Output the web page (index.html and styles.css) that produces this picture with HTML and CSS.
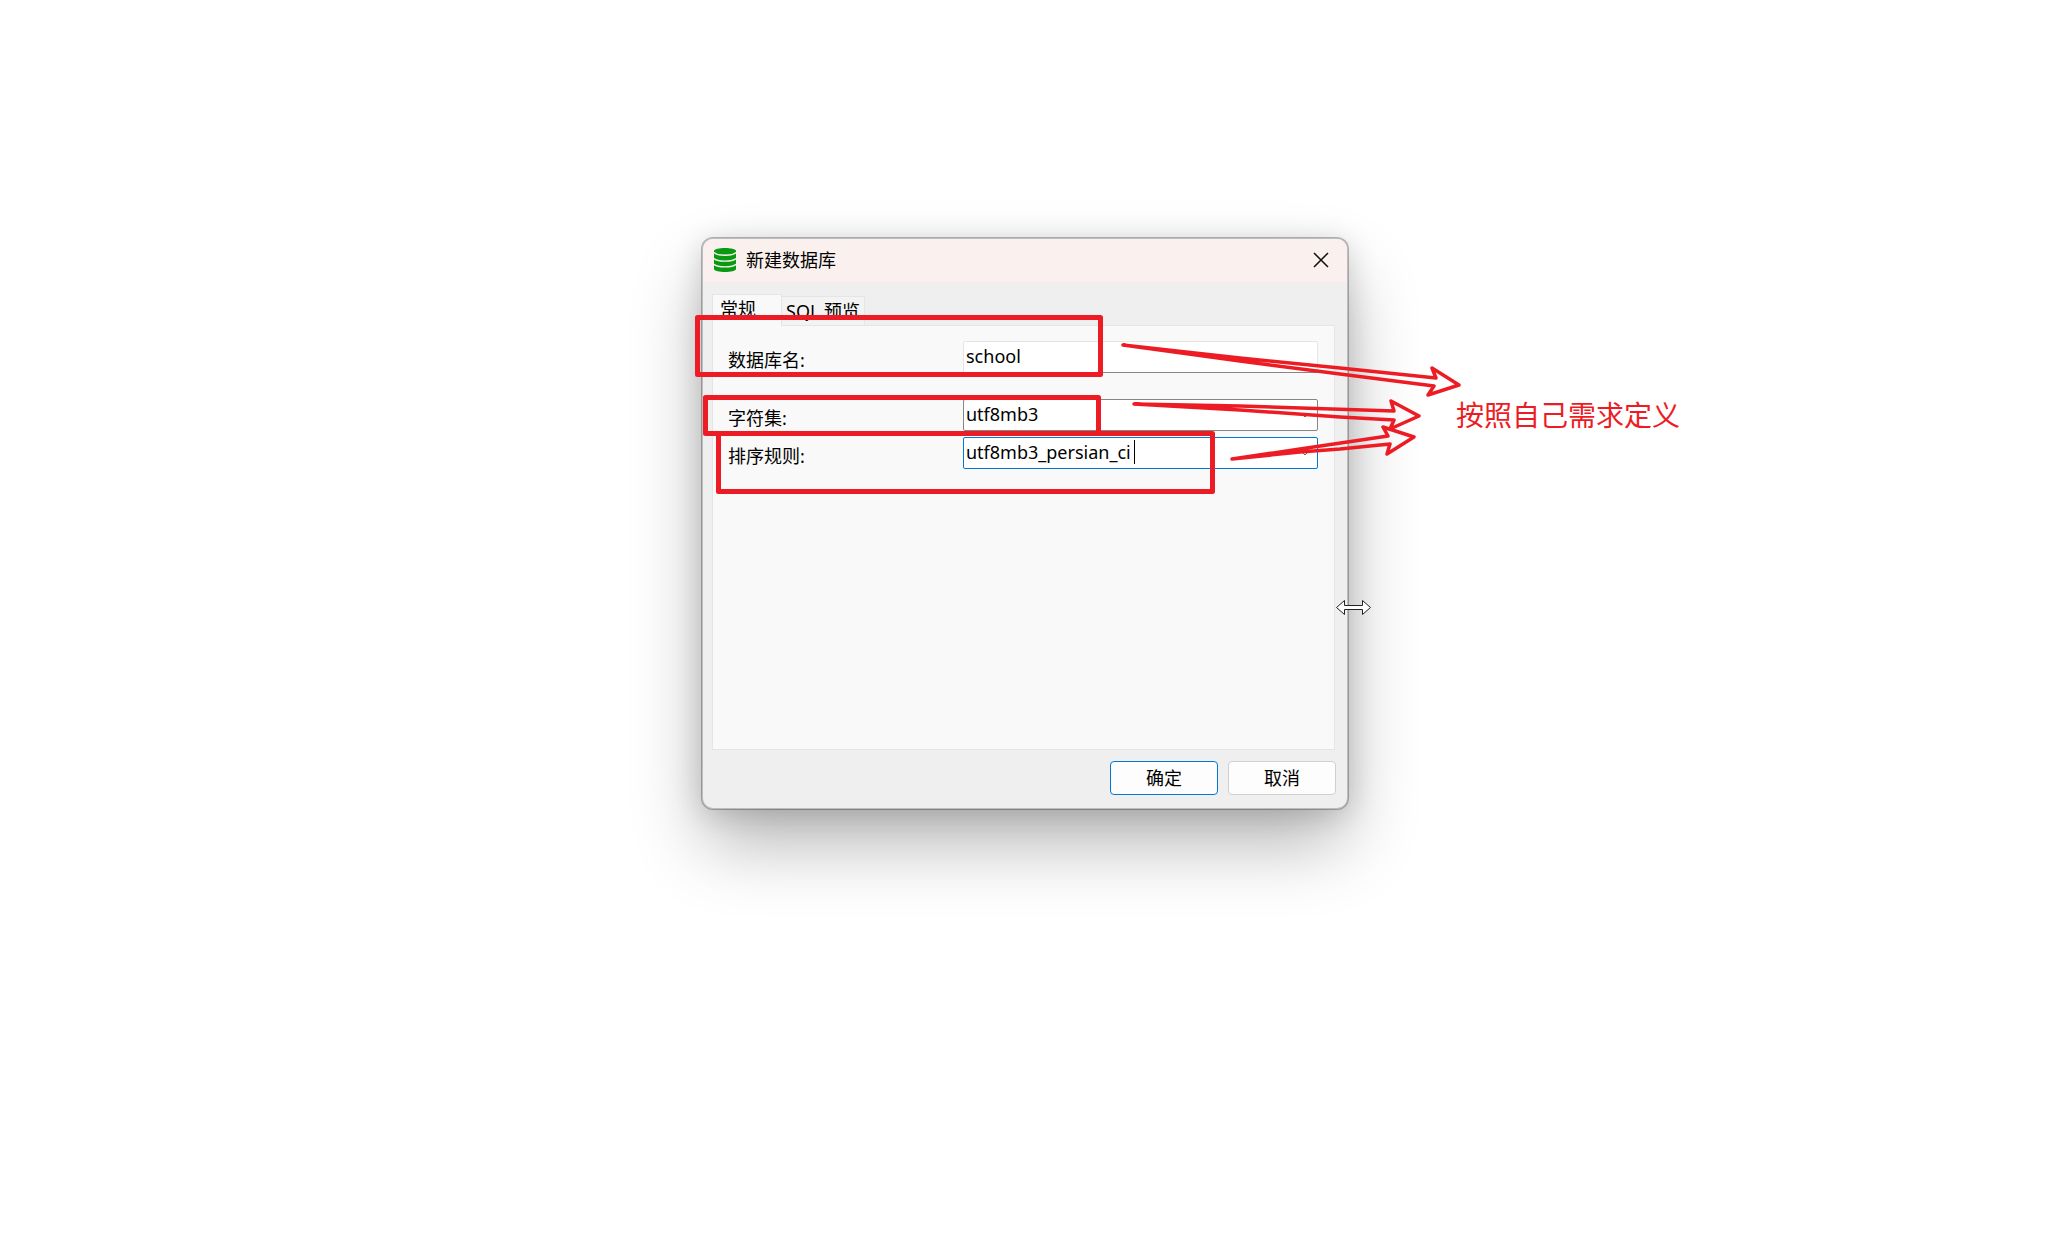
FILE: index.html
```html
<!DOCTYPE html>
<html lang="zh">
<head>
    <meta charset="UTF-8">
    <meta name="viewport" content="width=device-width, initial-scale=1.0">
    <title>新建数据库</title>
    <link rel="stylesheet" href="styles.css">
</head>
<body>
    <div class="stage">
        <div class="dialog" role="dialog" aria-labelledby="dialogTitle">
            <div class="titlebar">
                <svg class="db-icon" viewBox="0 0 22 24" aria-hidden="true">
                    <path fill="#0a9a12" d="M0 3C0 -1 22 -1 22 3V21C22 25 0 25 0 21Z"/>
                    <path fill="none" stroke="#faf0ee" stroke-width="1.4" d="M0 4.5C3 8.2 19 8.2 22 4.5M0 10.5C3 14 19 14 22 10.5M0 16.2C3 19.7 19 19.7 22 16.2"/>
                </svg>
                <span id="dialogTitle" class="title">新建数据库</span>
                <button class="close" type="button" aria-label="关闭">
                    <svg viewBox="0 0 16 16"><path d="M1 1L15 15M15 1L1 15"/></svg>
                </button>
            </div>

            <div class="content">
                <div class="tabs" role="tablist">
                    <button class="tab active" type="button" role="tab" aria-selected="true">常规</button>
                    <button class="tab" type="button" role="tab" aria-selected="false">SQL 预览</button>
                </div>

                <form class="panel">
                    <div class="row">
                        <label for="dbName">数据库名:</label>
                        <div class="field">
                            <input type="text" id="dbName" value="school">
                        </div>
                    </div>
                    <div class="row charset">
                        <label for="charset">字符集:</label>
                        <div class="field">
                            <select id="charset">
                                <option>utf8mb3</option>
                            </select>
                            <svg class="chevron" viewBox="0 0 6 4"><path d="M1 1L3 3L5 1"/></svg>
                        </div>
                    </div>
                    <div class="row">
                        <label for="collation">排序规则:</label>
                        <div class="field">
                            <select id="collation" class="focused">
                                <option>utf8mb3_persian_ci</option>
                            </select>
                            <span class="caret"></span>
                            <svg class="chevron" viewBox="0 0 6 4"><path d="M1 1L3 3L5 1"/></svg>
                        </div>
                    </div>
                </form>

                <div class="footer">
                    <button class="btn primary" type="button">确定</button>
                    <button class="btn" type="button">取消</button>
                </div>
            </div>
        </div>

        <!-- 标注 -->
        <svg class="marks" viewBox="701 237 648 573" aria-hidden="true">
            <g class="boxes">
                <rect x="697.5" y="317.5" width="403" height="57"/>
                <rect x="705.5" y="397.5" width="393" height="36"/>
                <rect x="718.5" y="433.5" width="494" height="58"/>
            </g>
            <g class="arrows">
                <path d="M1123 345L1240 358L1340 368L1436 378L1432 368L1459 385L1428 395L1434 386L1340 374L1240 361Z"/>
                <path d="M1134 404L1240 406L1394 411L1391 401L1419 416L1390 429L1394 420L1340 417L1240 410Z"/>
                <path d="M1232 459L1300 449L1388 436L1383 427L1414 437L1387 454L1390 444L1340 449L1300 452Z"/>
            </g>
            <path class="cursor" d="M1336.5 607.5L1344.5 600.5V605.5H1362.5V600.5L1370.5 607.5L1362.5 614.5V609.5H1344.5V614.5Z"/>
        </svg>
        <span class="note">按照自己需求定义</span>
    </div>
</body>
</html>
```

FILE: styles.css
```css
* {
    box-sizing: border-box;
}
body {
    margin: 0;
    padding: 237px 0;
    background: #fff;
    color: #000;
    font-family: "Noto Sans", "Noto Sans CJK SC", sans-serif;
    font-size: 18px;
    line-height: 24px;
}
button, input, select {
    font: inherit;
    color: inherit;
}
.stage {
    position: relative;
    width: 648px;
    margin: 0 auto;
}
.dialog {
    border: 2px solid rgba(0, 0, 0, 0.26);
    border-radius: 12px;
    background: #efefef;
    background-clip: padding-box;
    box-shadow: 0 36px 72px -4px rgba(0, 0, 0, 0.3), 0 4px 28px rgba(0, 0, 0, 0.14);
}
.titlebar {
    display: flex;
    align-items: center;
    height: 43px;
    padding: 0 10px 2px 11px;
    background: #faf0ee;
    border-radius: 10px 10px 0 0;
}
.db-icon {
    width: 22px;
    height: 24px;
}
.title {
    flex: 1;
    padding-left: 10px;
}
.close {
    display: flex;
    padding: 8px;
    border: none;
    background: none;
}
.close svg {
    width: 16px;
    height: 16px;
    fill: none;
    stroke: #111;
    stroke-width: 1.5;
}
.content {
    padding: 12px 11px 13px 9px;
}
.tabs {
    display: flex;
    align-items: flex-end;
    height: 32px;
}
.tab {
    height: 30px;
    padding: 0 4px;
    border: 1px solid #e5e5e5;
    border-left: none;
    background: #f3f3f3;
    white-space: nowrap;
}
.tab.active {
    z-index: 1;
    width: 70px;
    height: 32px;
    padding: 0 7px 4px;
    border-left: 1px solid #e5e5e5;
    border-bottom: none;
    background: #f9f9f9;
    text-align: left;
}
.panel {
    min-height: 425px;
    margin: -1px 1px 0 0;
    padding: 15px 16px 0 15px;
    border: 1px solid #e5e5e5;
    background: #f9f9f9;
}
.row {
    display: grid;
    grid-template-columns: 235px 1fr;
    align-items: center;
    margin-bottom: 6px;
}
.row.charset {
    margin-top: 26px;
}
.row label {
    padding-top: 6px;
}
.field {
    position: relative;
    height: 32px;
}
.field input, .field select {
    display: block;
    width: 100%;
    height: 32px;
    padding: 0 2px 2px;
    border: 1px solid #e5e5e5;
    border-bottom-color: #868686;
    border-radius: 2px;
    outline: none;
    background: #fff;
    appearance: none;
}
.field select {
    border-color: #868686;
}
.field select.focused {
    border-color: #0078d4;
}
.chevron {
    position: absolute;
    right: 10px;
    top: 15px;
    width: 6px;
    height: 4px;
    fill: none;
    stroke: #666;
}
.caret {
    position: absolute;
    left: 171px;
    top: 3px;
    width: 1px;
    height: 24px;
    background: #000;
}
.footer {
    display: flex;
    justify-content: flex-end;
    gap: 10px;
    padding-top: 11px;
}
.btn {
    width: 108px;
    height: 34px;
    padding: 0;
    border: 1px solid #d0d0d0;
    border-radius: 4px;
    background: #fdfdfd;
}
.btn.primary {
    border-color: #0078d4;
}
.marks {
    position: absolute;
    z-index: 2;
    left: 0;
    top: 0;
    width: 648px;
    height: 573px;
    overflow: visible;
    pointer-events: none;
}
.boxes rect, .arrows path {
    fill: none;
    stroke: #ed1c24;
    stroke-linejoin: round;
}
.boxes rect {
    stroke-width: 5;
}
.arrows path {
    stroke-width: 3.5;
}
.cursor {
    fill: #fff;
    stroke: #222;
}
.note {
    position: absolute;
    left: 755px;
    top: 160px;
    color: #ed1c24;
    font-size: 28px;
    line-height: 36px;
    white-space: nowrap;
}
```
